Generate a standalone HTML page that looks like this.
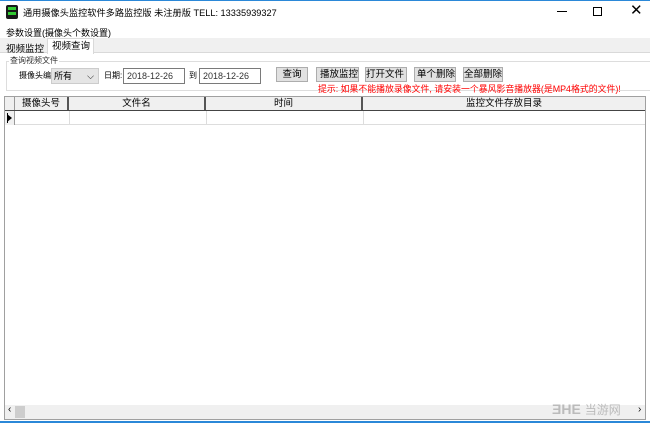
<!DOCTYPE html><html><head><meta charset="utf-8"><style>
*{margin:0;padding:0;box-sizing:border-box}
body{width:650px;height:423px;position:relative;overflow:hidden;background:#fff;font-family:"Liberation Sans","Noto Sans CJK SC",sans-serif;font-size:9px;color:#000}
.a{position:absolute;white-space:nowrap}
.btn{position:absolute;height:15px;border:1px solid #adadad;background:#e1e1e1;font-size:9.5px;line-height:13px;text-align:center;overflow:hidden}
.inp{position:absolute;height:16px;border:1px solid #7a7a7a;background:#fff;font-size:9px;line-height:14px;padding-left:3px;color:#333}
.hd{position:absolute;top:97px;height:13px;font-size:9.5px;line-height:13px;text-align:center;border-right:2px solid #555}
</style></head><body>
<div class="a" style="left:0;top:0;width:650px;height:1px;background:#2b88d8"></div>
<div class="a" style="left:6px;top:5px;width:12px;height:14px;background:#1a1a1a;border-radius:2px"></div>
<div class="a" style="left:8px;top:7px;width:8px;height:3px;background:#3c3"></div>
<div class="a" style="left:8px;top:12px;width:8px;height:3px;background:#3c3"></div>
<div class="a" style="left:23px;top:5px;font-size:9.2px">通用摄像头监控软件多路监控版 未注册版 TELL: 13335939327</div>
<div class="a" style="left:557px;top:11px;width:10px;height:1px;background:#000"></div>
<div class="a" style="left:593px;top:7px;width:9px;height:9px;border:1px solid #000"></div>
<div class="a" style="left:630px;top:1px;font-size:15px">✕</div>
<div class="a" style="left:6px;top:26px;font-size:9px">参数设置(摄像头个数设置)</div>
<div class="a" style="left:0;top:38px;width:650px;height:15px;background:#f0f0f0;border-bottom:1px solid #d9d9d9"></div>
<div class="a" style="left:6px;top:41px;font-size:9.5px">视频监控</div>
<div class="a" style="left:47px;top:38px;width:47px;height:16px;background:#fff;border:1px solid #d9d9d9;border-bottom:none;font-size:9.5px;padding-left:4px;line-height:15px">视频查询</div>
<div class="a" style="left:6px;top:61px;width:644px;height:30px;border:1px solid #ddd;border-right:none"></div>
<div class="a" style="left:9px;top:55px;font-size:8px;background:#fff;padding:0 1px;color:#333">查询视频文件</div>
<div class="a" style="left:19px;top:70px;font-size:8px">摄像头编</div>
<div class="a" style="left:51px;top:68px;width:48px;height:16px;background:#e5e5e5;border:1px solid #ccc;font-size:9px;line-height:14px;padding-left:2px">所有<span style="position:absolute;right:4px;top:0;font-size:9px">⌵</span></div>
<div class="a" style="left:104px;top:70px;font-size:8px">日期:</div>
<div class="inp" style="left:123px;top:68px;width:62px">2018-12-26</div>
<div class="a" style="left:189px;top:70px;font-size:8px">到</div>
<div class="inp" style="left:199px;top:68px;width:62px">2018-12-26</div>
<div class="btn" style="left:276px;top:67px;width:32px">查询</div>
<div class="btn" style="left:316px;top:67px;width:43px;text-align:right">播放监控文件</div>
<div class="btn" style="left:365px;top:67px;width:42px;text-align:left">打开文件目录</div>
<div class="btn" style="left:414px;top:67px;width:42px;text-align:right">单个删除视频</div>
<div class="btn" style="left:463px;top:67px;width:40px">全部删除</div>
<div class="a" style="left:318px;top:82px;font-size:8.9px;color:#f00">提示: 如果不能播放录像文件, 请安装一个暴风影音播放器(是MP4格式的文件)!</div>
<div class="a" style="left:4px;top:96px;width:642px;height:324px;border:1px solid #a0a0a0;background:#fff"></div>
<div class="a" style="left:5px;top:97px;width:640px;height:14px;background:#f0f0f0;border-bottom:1px solid #444"></div>
<div class="hd" style="left:5px;width:10px;border-right:1px solid #999"></div>
<div class="hd" style="left:15px;width:54px">摄像头号</div>
<div class="hd" style="left:69px;width:137px">文件名</div>
<div class="hd" style="left:206px;width:157px">时间</div>
<div class="hd" style="left:363px;width:282px;border-right:none">监控文件存放目录</div>
<div class="a" style="left:5px;top:111px;width:640px;height:14px;border-bottom:1px solid #ddd"></div>
<div class="a" style="left:5px;top:111px;width:10px;height:14px;border-right:1px solid #999;background:#f0f0f0"></div>
<div class="a" style="left:7px;top:114px;width:0;height:0;border-left:5px solid #000;border-top:4px solid transparent;border-bottom:4px solid transparent"></div>
<div class="a" style="left:7px;top:113px;width:1px;height:10px;background:#000"></div>
<div class="a" style="left:69px;top:111px;width:1px;height:14px;background:#ddd"></div>
<div class="a" style="left:206px;top:111px;width:1px;height:14px;background:#ddd"></div>
<div class="a" style="left:363px;top:111px;width:1px;height:14px;background:#ddd"></div>
<div class="a" style="left:5px;top:405px;width:640px;height:14px;background:#f0f0f0"></div>
<div class="a" style="left:8px;top:404px;font-size:10px">‹</div>
<div class="a" style="left:15px;top:406px;width:10px;height:12px;background:#cdcdcd"></div>
<div class="a" style="left:638px;top:404px;font-size:10px">›</div>
<div class="a" style="left:552px;top:401px;font-size:14px;color:#bbb;font-weight:bold">ƎHE <span style="font-size:12px;font-weight:normal">当游网</span></div>
<div class="a" style="left:0;top:421px;width:650px;height:2px;background:#2b88d8"></div>
</body></html>
